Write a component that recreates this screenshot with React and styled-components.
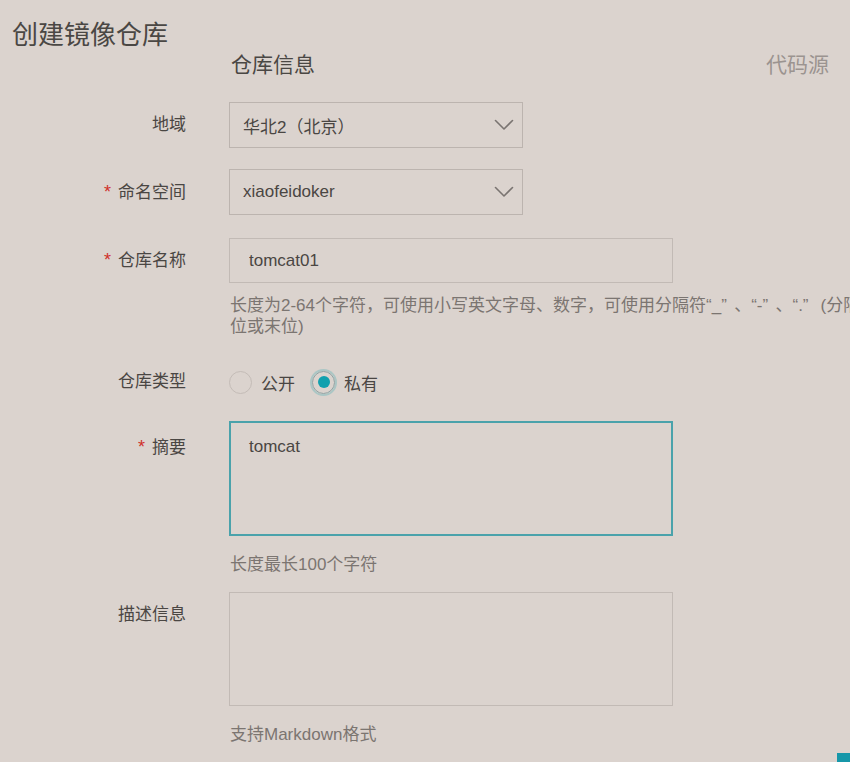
import React from "react";
import styled, { createGlobalStyle } from "styled-components";

const GlobalStyle = createGlobalStyle`
  html, body {
    margin: 0;
    padding: 0;
    background: #dbd3ce;
    overflow: hidden;
  }
  body {
    font-family: "Liberation Sans", "Noto Sans CJK SC", sans-serif;
    color: #4a4643;
  }
`;

const Page = styled.div`
  min-height: 100vh;
  box-sizing: border-box;
  background: #dbd3ce;
`;

const Title = styled.h1`
  margin: 0;
  padding: 20px 0 0 12px;
  font-size: 26px;
  font-weight: normal;
  line-height: 30px;
  color: #4a4744;
`;

const SubHeader = styled.div`
  display: flex;
  justify-content: space-between;
  margin-top: 3px;
  padding: 0 21px 0 231px;
  font-size: 21px;
  line-height: 24px;
`;

const Tab = styled.span`
  color: ${(p) => (p.$muted ? "#9b9490" : "#4a4744")};
`;

const Form = styled.div`
  display: flex;
  flex-direction: column;
  margin-top: 25px;
`;

const Row = styled.div`
  display: grid;
  grid-template-columns: 186px 1fr;
  column-gap: 43px;
  margin-top: ${(p) => p.$mt || 0}px;
`;

const Label = styled.div`
  text-align: right;
  font-size: 17px;
  line-height: ${(p) => p.$lh || 46}px;
  padding-top: ${(p) => p.$pt || 0}px;
  color: #4a4643;
  white-space: nowrap;
`;

const Star = styled.span`
  color: #d0302a;
  font-size: 18px;
  margin-right: 7px;
`;

const Control = styled.div`
  display: flex;
  flex-direction: column;
  align-items: flex-start;
  min-width: 0;
`;

const Select = styled.div`
  box-sizing: border-box;
  width: 294px;
  height: 46px;
  border: 1px solid #bcb4af;
  display: flex;
  align-items: center;
  justify-content: space-between;
  padding: 0 8px 0 13px;
  font-size: 17px;
  color: #4a4643;
`;

const TextInput = styled.input`
  box-sizing: border-box;
  width: 444px;
  height: 45px;
  border: 1px solid #c2bab5;
  background: transparent;
  padding: 0 19px;
  font-family: inherit;
  font-size: 17px;
  color: #4a4643;
  outline: none;
`;

const TextArea = styled.textarea`
  box-sizing: border-box;
  display: block;
  width: 444px;
  height: ${(p) => p.$h}px;
  border: ${(p) => (p.$focused ? "2px solid #4aa2ab" : "1px solid #c2bab5")};
  background: transparent;
  padding: ${(p) => (p.$focused ? "13px 18px" : "14px 19px")};
  font-family: inherit;
  font-size: 17px;
  line-height: 21px;
  color: #4a4643;
  resize: none;
  outline: none;
`;

const Help = styled.div`
  margin-top: ${(p) => p.$mt || 0}px;
  padding-left: 1px;
  font-size: 17px;
  line-height: 21px;
  color: #7b7571;
  white-space: nowrap;
`;

const WideQuote = styled.span`
  display: inline-block;
  width: 13px;
`;

const RadioGroup = styled.div`
  display: flex;
  align-items: center;
  height: 30px;
  gap: 17px;
`;

const RadioOption = styled.label`
  display: flex;
  align-items: center;
  gap: 9px;
  font-size: 17px;
  color: #4a4643;
`;

const RadioCircle = styled.span`
  box-sizing: border-box;
  width: 23px;
  height: 23px;
  border-radius: 50%;
  border: 1px solid ${(p) => (p.$checked ? "#8fa3a4" : "#c4bcb7")};
  display: flex;
  align-items: center;
  justify-content: center;
  box-shadow: ${(p) => (p.$checked ? "0 0 0 2px rgba(60, 170, 175, 0.3)" : "none")};
  &::after {
    content: "";
    display: ${(p) => (p.$checked ? "block" : "none")};
    width: 12px;
    height: 12px;
    border-radius: 50%;
    background: #11a0ae;
  }
`;

const FloatBadge = styled.div`
  position: fixed;
  right: 0;
  bottom: 0;
  width: 13px;
  height: 9px;
  background: #1697a9;
`;

const Chevron = () => (
  <svg width="20" height="12" viewBox="0 0 20 12" fill="none">
    <path d="M1.5 1.5 L10 10 L18.5 1.5" stroke="#7a7471" strokeWidth="1.6" strokeLinecap="round" strokeLinejoin="round" />
  </svg>
);

export default function App() {
  return (
    <Page>
      <GlobalStyle />
      <Title>创建镜像仓库</Title>
      <SubHeader>
        <Tab>仓库信息</Tab>
        <Tab $muted>代码源</Tab>
      </SubHeader>
      <Form>
        <Row>
          <Label>地域</Label>
          <Control>
            <Select>
              <span>华北2（北京）</span>
              <Chevron />
            </Select>
          </Control>
        </Row>
        <Row $mt={21}>
          <Label>
            <Star>*</Star>命名空间
          </Label>
          <Control>
            <Select>
              <span>xiaofeidoker</span>
              <Chevron />
            </Select>
          </Control>
        </Row>
        <Row $mt={22}>
          <Label $lh={45}>
            <Star>*</Star>仓库名称
          </Label>
          <Control>
            <TextInput defaultValue="tomcat01" readOnly />
            <Help $mt={12}>
              长度为2-64个字符，可使用小写英文字母、数字，可使用分隔符“_<WideQuote>”</WideQuote>、“-<WideQuote>”</WideQuote>、“.<WideQuote>”</WideQuote> (分隔符不能在首
              <br />
              位或末位)
            </Help>
          </Control>
        </Row>
        <Row $mt={30}>
          <Label $lh={30}>仓库类型</Label>
          <Control>
            <RadioGroup>
              <RadioOption>
                <RadioCircle />
                公开
              </RadioOption>
              <RadioOption>
                <RadioCircle $checked />
                私有
              </RadioOption>
            </RadioGroup>
          </Control>
        </Row>
        <Row $mt={24}>
          <Label $pt={3}>
            <Star>*</Star>摘要
          </Label>
          <Control>
            <TextArea $h={115} $focused defaultValue="tomcat" readOnly />
            <Help $mt={18}>长度最长100个字符</Help>
          </Control>
        </Row>
        <Row $mt={17}>
          <Label>描述信息</Label>
          <Control>
            <TextArea $h={114} readOnly />
            <Help $mt={18}>支持Markdown格式</Help>
          </Control>
        </Row>
      </Form>
      <FloatBadge />
    </Page>
  );
}
